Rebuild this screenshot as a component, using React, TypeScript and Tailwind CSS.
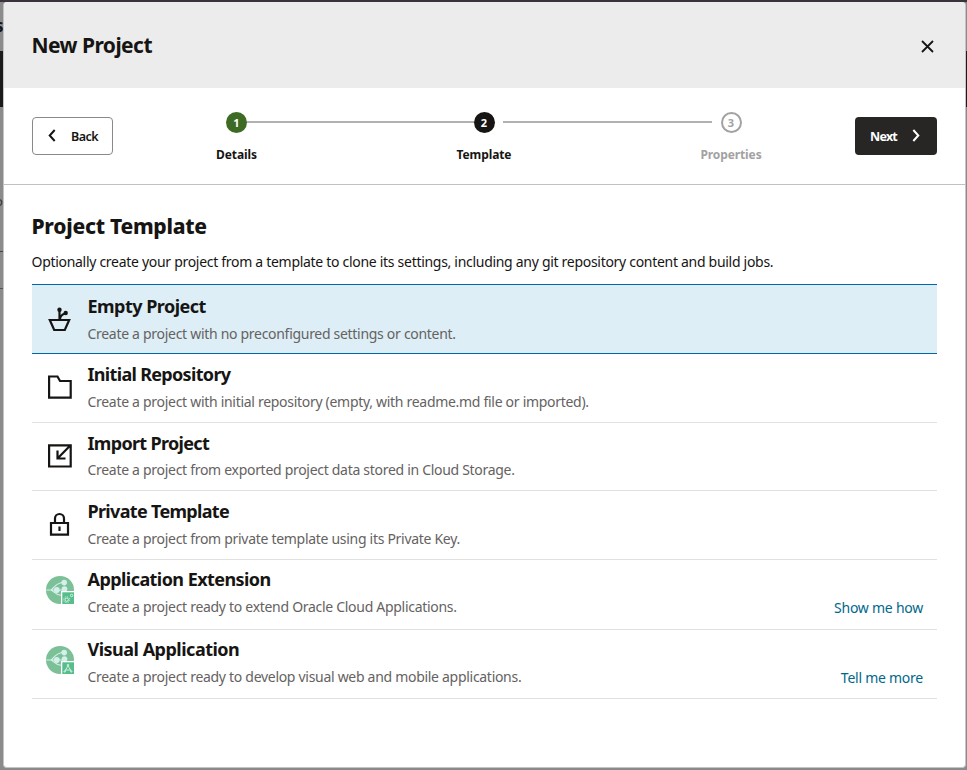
import React from "react";

const ink = "#161513";

function PlantIcon() {
  return (
    <svg width="24" height="26" viewBox="0 0 24 26" fill="none" stroke={ink} strokeWidth="2.200">
      <path d="M1.800 14H21.200L16.800 24H6.200Z" />
      <path d="M11.500 14V4M12 13C12.300 10 14 8.500 17 7.500" />
      <circle cx="11.500" cy="3.700" r="2.200" fill={ink} stroke="none" />
      <circle cx="17.700" cy="7" r="2.200" fill={ink} stroke="none" />
    </svg>
  );
}

function FolderIcon() {
  return (
    <svg width="24" height="24" viewBox="0 0 24 24" fill="none" stroke={ink} strokeWidth="2.200">
      <path d="M1.100 1.500H9.500L12 6H22.700V22.700H1.100Z" />
    </svg>
  );
}

function ImportIcon() {
  return (
    <svg width="24" height="24" viewBox="0 0 24 24" fill="none" stroke={ink} strokeWidth="2.200">
      <path d="M1.100 1.300H22.700V22.500H1.100ZM22 1.800L10 14M9.500 6.500V14.500H17.500" />
    </svg>
  );
}

function LockIcon() {
  return (
    <svg width="24" height="24" viewBox="0 0 24 24" fill="none" stroke={ink} strokeWidth="2.200">
      <path d="M4 11H21V22.700H4ZM8 11V6.500A4.500 4.500 0 0 1 17 6.500V11M12.500 14.500V19" />
    </svg>
  );
}

function GlobeIcon({ kind }: { kind: "gears" | "shapes" }) {
  return (
    <svg width="29" height="29" viewBox="0 0 29 29" fill="none">
      <circle cx="14" cy="14" r="14" fill="#7cc097" />
      <g stroke="#d6f0ea" strokeWidth="1.200">
        <path d="M.3 14H19M5 14C7.500 13 9 6.500 18 6.500M5 14C7.500 15 9 19 16 19.500" />
      </g>
      <g fill="#d3f0ec">
        <circle cx="18.200" cy="6.600" r="2.800" />
        <circle cx="10.800" cy="14" r="2.900" />
        <circle cx="18.500" cy="13" r="2.800" />
      </g>
      <path d="M15 15H29V29H15Z" fill="#fff" />
      <path d="M16.300 16.300H28V28H16.300Z" fill="#57bd8b" />
      {kind === "gears" ? (
        <g stroke="#d8f3e9">
          <circle cx="20.700" cy="23.700" r="1.700" />
          <circle cx="20.700" cy="23.700" r="3" strokeDasharray="1.100 1.250" />
          <circle cx="25.600" cy="19.500" r="1.200" />
        </g>
      ) : (
        <g stroke="#d8f3e9" strokeWidth=".9">
          <path d="M22 19.500L18.800 25.500M22 19.500L25.200 25.500M19 24H25" />
          <circle cx="22" cy="19" r=".8" />
          <circle cx="18.700" cy="25.500" r=".7" />
          <circle cx="25.300" cy="25.500" r=".7" />
        </g>
      )}
    </svg>
  );
}

type Template = {
  title: string;
  text: string;
  icon: React.ReactNode;
  row: string;
  iconClass: string;
  titleClass: string;
  textClass: string;
  link?: string;
};

const templates: Template[] = [
  { title: "Empty Project", text: "Create a project with no preconfigured settings or content.", icon: <PlantIcon />, row: "h-[70px] border-y border-[#0067a8] bg-[#ddeef7] pt-[9px]", iconClass: "pt-[12px] pl-[15.500px]", titleClass: "tracking-[-0.520px]", textClass: "mt-[6px]" },
  { title: "Initial Repository", text: "Create a project with initial repository (empty, with readme.md file or imported).", icon: <FolderIcon />, row: "h-[69px] border-b border-[#e1e1e1] pt-[8px]", iconClass: "pt-[13px] pl-[15.500px]", titleClass: "tracking-[-0.680px]", textClass: "mt-[6px]" },
  { title: "Import Project", text: "Create a project from exported project data stored in Cloud Storage.", icon: <ImportIcon />, row: "h-[68px] border-b border-[#e1e1e1] pt-[8px]", iconClass: "pt-[13px] pl-[15.500px]", titleClass: "tracking-[-0.680px]", textClass: "mt-[5px]" },
  { title: "Private Template", text: "Create a project from private template using its Private Key.", icon: <LockIcon />, row: "h-[69px] border-b border-[#e1e1e1] pt-[8px]", iconClass: "pt-[13px] pl-[15px]", titleClass: "tracking-[-0.680px]", textClass: "mt-[6px]" },
  { title: "Application Extension", text: "Create a project ready to extend Oracle Cloud Applications.", icon: <GlobeIcon kind="gears" />, row: "h-[70px] border-b border-[#e1e1e1] pt-[7px]", iconClass: "pt-[9px] pl-[14px]", titleClass: "tracking-[-0.560px]", textClass: "mt-[6px]", link: "Show me how" },
  { title: "Visual Application", text: "Create a project ready to develop visual web and mobile applications.", icon: <GlobeIcon kind="shapes" />, row: "h-[69px] border-b border-[#e1e1e1] pt-[7px]", iconClass: "pt-[9px] pl-[14px]", titleClass: "tracking-[-0.500px]", textClass: "mt-[6px]", link: "Tell me more" },
];

function TemplateRow({ item }: { item: Template }) {
  return (
    <li className={`flex ${item.row}`}>
      <div className={`w-[55.500px] shrink-0 ${item.iconClass}`}>{item.icon}</div>
      <div className="grow">
        <h3 className={`text-[18px] leading-[24px] font-bold whitespace-nowrap ${item.titleClass}`}>{item.title}</h3>
        <div className={`flex justify-between pr-[14px] text-[14px] leading-[20px] whitespace-nowrap ${item.textClass}`}>
          <p className="tracking-[-0.295px] text-[#65625f]">{item.text}</p>
          {item.link && <a className="pt-[1px] tracking-[-0.250px] text-[#00688c]">{item.link}</a>}
        </div>
      </div>
    </li>
  );
}

function Step({ n, label, circle, text }: { n: number; label: string; circle: string; text: string }) {
  return (
    <div className="flex w-[80px] shrink-0 flex-col items-center">
      <span className={`flex size-[21px] items-center justify-center rounded-full text-[11px] leading-none font-bold ${circle}`}>{n}</span>
      <span className={`mt-[13px] text-[12px] leading-[18px] font-bold tracking-[-0.100px] whitespace-nowrap ${text}`}>{label}</span>
    </div>
  );
}

export default function App() {
  return (
    <div className="relative h-[770px] w-[967px] overflow-hidden bg-[#8b8b8b] font-['Noto_Sans',sans-serif] text-[#161513]">
      <div className="absolute inset-x-0 top-0 h-[2px] bg-[#39343a]" />
      <div className="absolute inset-x-0 top-[51px] h-[56px] bg-[#1c1b1b]" />
      <span className="absolute top-[16px] -left-[5px] text-[17px] leading-[20px] font-bold">s</span>
      <span className="absolute top-[192px] -left-[5px] text-[13px] leading-[18px] text-[#333]">o</span>
      <div className="absolute top-[251px] left-0 h-px w-1 bg-[#444]" />
      <div className="absolute top-[288px] left-0 h-px w-1 bg-[#555]" />
      <div className="absolute top-[2px] left-[3px] flex h-[766px] w-[963px] flex-col overflow-hidden rounded-[4px] border-x border-b border-[#c4c4c4] bg-white">
        <header className="flex h-[86px] shrink-0 items-center justify-between bg-[#ececec] pr-[31px] pl-[28px]">
          <h1 className="-ml-[0.500px] text-[21px] leading-[28px] font-bold tracking-[-0.550px]">New Project</h1>
          <svg width="13" height="13" viewBox="0 0 13 13" stroke={ink} strokeWidth="1.800" className="mt-[2px]">
            <path d="M1 1L12 12M12 1L1 12" />
          </svg>
        </header>
        <nav className="flex h-[97px] shrink-0 items-start border-b border-[#c1c1c1] pl-[28px]">
          <button className="mt-[29px] flex h-[38px] w-[81px] items-center rounded-[4px] border border-[#8b8986] pl-[15px] text-[12.500px] font-semibold">
            <svg width="8" height="13" viewBox="0 0 8 13" fill="none" stroke={ink} strokeWidth="2" className="-mt-[1px]">
              <path d="M6.700 1L1.700 6.500L6.700 12" />
            </svg>
            <span className="ml-[15px] pt-[2px] tracking-[-0.550px]">Back</span>
          </button>
          <div className="mt-[24px] ml-[83.500px] flex w-[575.500px] items-start">
            <Step n={1} label="Details" circle="bg-[#3d6b24] text-white" text="" />
            <div className="-mr-[29.500px] -ml-[30px] mt-[9px] h-[2px] w-[227px] shrink-0 bg-[#b1b1b1]" />
            <Step n={2} label="Template" circle="bg-[#161513] text-white" text="" />
            <div className="-mr-[21px] -ml-[21px] mt-[9px] h-[2px] w-[209px] shrink-0 bg-[#b1b1b1]" />
            <Step n={3} label="Properties" circle="border-2 border-[#a2a2a2] text-[#a2a2a2]" text="text-[#a2a2a2]" />
          </div>
          <button className="mt-[29px] ml-[83px] flex h-[38px] w-[82px] shrink-0 items-center rounded-[4px] bg-[#272625] pl-[15px] text-[12.500px] font-bold text-white">
            <span className="pt-[2px] tracking-[-0.750px]">Next</span>
            <svg width="8" height="13" viewBox="0 0 8 13" fill="none" stroke="#fff" strokeWidth="2" className="-mt-[1px] ml-[15px]">
              <path d="M1.300 1L6.300 6.500L1.300 12" />
            </svg>
          </button>
        </nav>
        <main className="px-[28px] pt-[27px]">
          <h2 className="-ml-[0.500px] text-[21px] leading-[28px] font-extrabold tracking-[-0.280px] whitespace-nowrap">Project Template</h2>
          <p className="mt-[12px] -ml-[0.500px] text-[14px] leading-[20px] tracking-[-0.295px] whitespace-nowrap">
            Optionally create your project from a template to clone its settings, including any git repository content and build jobs.
          </p>
          <ul className="mt-[12px] w-[905px]">
            {templates.map((t) => (
              <TemplateRow key={t.title} item={t} />
            ))}
          </ul>
        </main>
      </div>
    </div>
  );
}
